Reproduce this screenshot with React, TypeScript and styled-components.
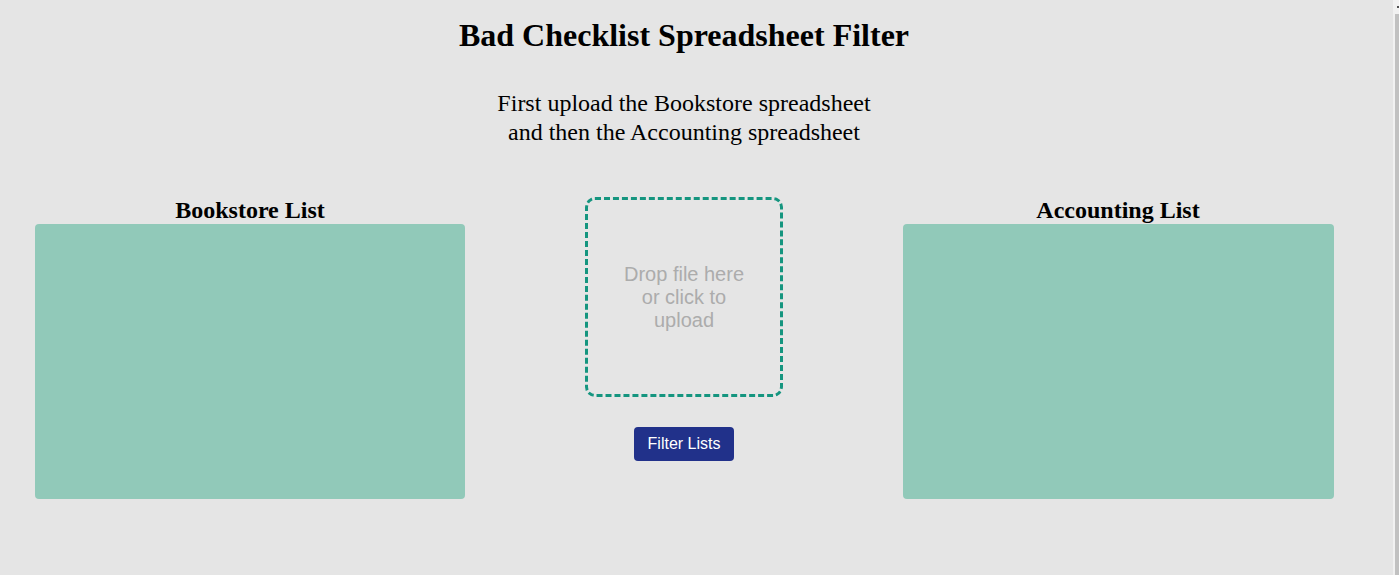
import React from "react";
import styled, { createGlobalStyle } from "styled-components";

const Global = createGlobalStyle`
  html, body {
    margin: 0;
    padding: 0;
    background: #e5e5e5;
    overflow: hidden;
  }
  body {
    font-family: "Liberation Serif", "Times New Roman", serif;
    color: #000;
  }
`;

const Page = styled.main`
  width: 1368px;
  min-height: 575px;
  display: flex;
  flex-direction: column;
  align-items: center;
`;

const Title = styled.h1`
  margin: 17px 0 0;
  font-size: 32px;
  font-weight: bold;
  line-height: normal;
  text-align: center;
`;

const Intro = styled.p`
  margin: 35px 0 0;
  font-size: 24px;
  line-height: 29px;
  text-align: center;
`;

const Columns = styled.section`
  width: 100%;
  box-sizing: border-box;
  padding: 0 33px;
  margin-top: 50px;
  display: grid;
  grid-template-columns: repeat(3, 1fr);
  align-items: start;
`;

const Column = styled.div`
  display: flex;
  flex-direction: column;
  align-items: center;
`;

const ListTitle = styled.h2`
  margin: 0;
  font-size: 24px;
  font-weight: bold;
  line-height: normal;
  text-align: center;
`;

const ListBox = styled.div<{ $w: number }>`
  width: ${(p) => p.$w}px;
  height: 275px;
  background: #91c9b9;
  border-radius: 4px;
`;

const DropZone = styled.div`
  width: 198px;
  height: 200px;
  box-sizing: border-box;
  border: 3px dashed #15957f;
  border-radius: 10px;
  display: flex;
  align-items: center;
  justify-content: center;
  padding: 0 33px;
  font-family: "Liberation Sans", Arial, sans-serif;
  font-size: 20px;
  line-height: 23px;
  color: #acacac;
  text-align: center;
  cursor: pointer;
`;

const FilterButton = styled.button`
  margin-top: 30px;
  width: 100px;
  height: 34px;
  border: none;
  border-radius: 4px;
  background: #21318a;
  color: #fff;
  font-family: "Liberation Sans", Arial, sans-serif;
  font-size: 16px;
  cursor: pointer;
`;

const ScrollTrack = styled.div`
  position: fixed;
  top: 0;
  right: 0;
  width: 6px;
  height: 100%;
  background: #f1f1f1;
`;

const ScrollThumb = styled.div`
  position: absolute;
  top: 14px;
  left: 2px;
  right: 0;
  bottom: 0;
  background: #c1c1c1;
`;

const ScrollArrow = styled.div`
  position: absolute;
  top: 6px;
  left: 4px;
  width: 2px;
  height: 2px;
  background: #505050;
`;

export default function App() {
  return (
    <>
      <Global />
      <Page>
        <Title>Bad Checklist Spreadsheet Filter</Title>
        <Intro>
          First upload the Bookstore spreadsheet
          <br />
          and then the Accounting spreadsheet
        </Intro>
        <Columns>
          <Column>
            <ListTitle>Bookstore List</ListTitle>
            <ListBox $w={430} />
          </Column>
          <Column>
            <DropZone>Drop file here or click to upload</DropZone>
            <FilterButton>Filter Lists</FilterButton>
          </Column>
          <Column>
            <ListTitle>Accounting List</ListTitle>
            <ListBox $w={431} />
          </Column>
        </Columns>
      </Page>
      <ScrollTrack>
        <ScrollArrow />
        <ScrollThumb />
      </ScrollTrack>
    </>
  );
}
